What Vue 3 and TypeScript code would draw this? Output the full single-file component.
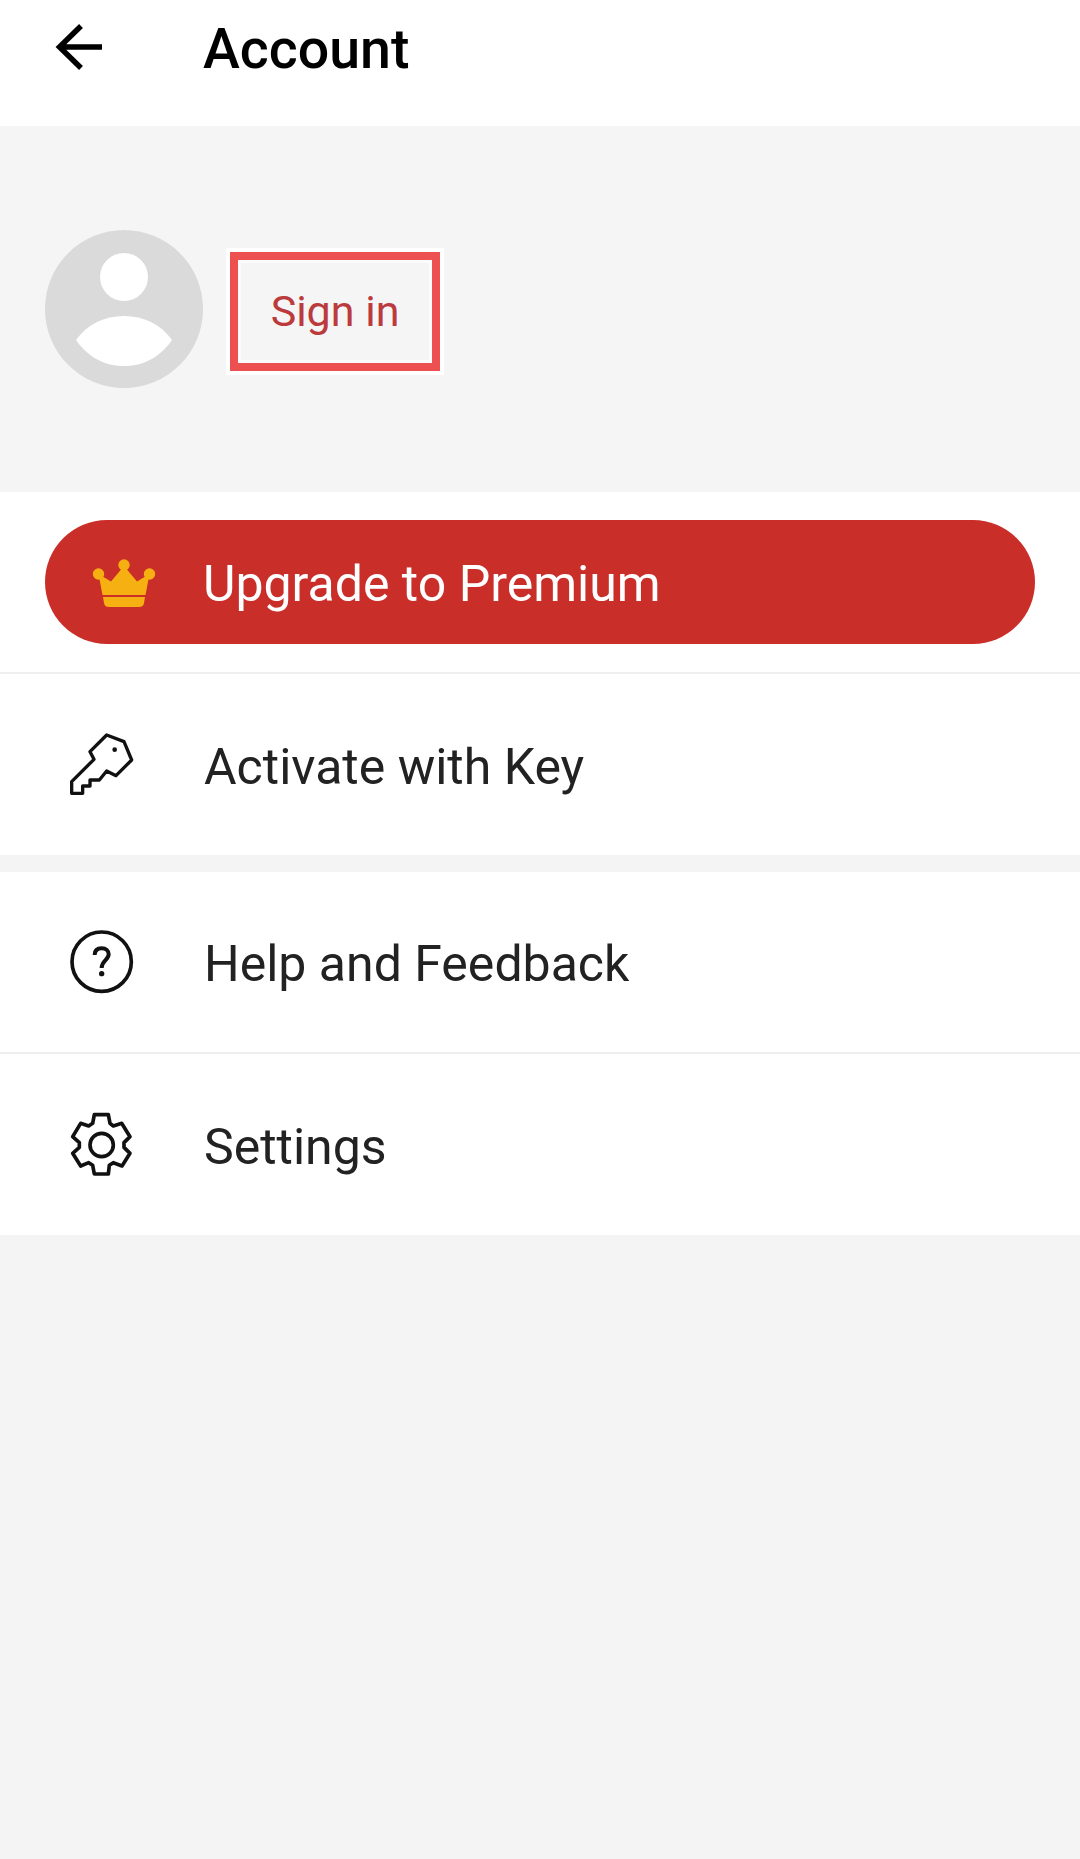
<script setup lang="ts">
// bottom list rows are grouped in two white blocks
const helpRows = ['Help and Feedback', 'Settings']
</script>

<template>
  <div class="page">
    <header class="top-bar">
      <svg class="back" width="60" height="60" viewBox="0 0 60 60" fill="none">
        <path d="M31 7 L9.5 28 L31 49 M10 28 H52" stroke="#000" stroke-width="5.5" />
      </svg>
      <h1 class="title">Account</h1>
    </header>

    <section class="profile">
      <svg class="avatar" width="158" height="158" viewBox="0 0 158 158">
        <circle cx="79" cy="79" r="79" fill="#dadada" />
        <circle cx="79" cy="47" r="24" fill="#fff" />
        <path d="M31 110 C42 94 60 86 79 86 C98 86 116 94 127 110 C116 126 100 136 79 136 C58 136 42 126 31 110 Z" fill="#fff" />
      </svg>
      <div class="sign-in">Sign in</div>
    </section>

    <section class="block">
      <div class="premium-wrap">
        <button class="premium">
          <svg class="crown" width="70" height="56" viewBox="0 0 70 56">
            <circle cx="7.5" cy="20" r="5.7" fill="#f6b012" />
            <circle cx="33" cy="11" r="5.7" fill="#f6b012" />
            <circle cx="58.5" cy="20" r="5.7" fill="#f6b012" />
            <path d="M33 12 L46 27.5 L58.5 20 L54.5 41 H11.5 L7.5 20 L20 27.5 Z" fill="#f6b012" />
            <path d="M12 43 H54 L53 49 Q52.5 53 48 53 H18 Q13.5 53 13 49 Z" fill="#f6b012" />
          </svg>
          <span>Upgrade to Premium</span>
        </button>
      </div>
      <div class="row">
        <span class="icon">
          <svg width="110" height="110" viewBox="0 0 330 330" fill="none">
            <path d="M170 75 L222 95 L245 150 L198 197 L170 183 L148 210 H120 V228 H98 V250 H65 V215 L132 148 L120 125 Z" stroke="#111" stroke-width="10" stroke-linejoin="round" />
            <circle cx="194" cy="119" r="7" fill="#111" />
          </svg>
        </span>
        <span class="label">Activate with Key</span>
      </div>
    </section>

    <section class="block second">
      <div v-for="(text, i) in helpRows" :key="text" class="row" :class="{ split: i > 0 }">
        <span class="icon">
          <svg v-if="i === 0" width="110" height="110" viewBox="0 0 330 330" fill="none">
            <circle cx="155" cy="164" r="89" stroke="#111" stroke-width="11" />
            <path d="M134 144 C134 129 143 124 155 124 C168 124 176 131 176 142 C176 159 155 161 155 183" stroke="#111" stroke-width="12" />
            <circle cx="155" cy="200" r="8" fill="#111" />
          </svg>
          <svg v-else width="110" height="110" viewBox="0 0 330 330" fill="none">
            <path d="M133 74 H175 L180 100 L190 108 L215 100 L240 140 L222 158 V172 L240 190 L216 228 L190 218 L178 226 L175 252 H133 L128 226 L116 218 L92 228 L68 190 L88 172 V158 L68 140 L92 100 L116 108 L128 100 Z" stroke="#111" stroke-width="11" stroke-linejoin="round" />
            <circle cx="155" cy="165" r="35" stroke="#111" stroke-width="11" />
          </svg>
        </span>
        <span class="label">{{ text }}</span>
      </div>
    </section>
  </div>
</template>

<style scoped>
.page {
  min-height: 1859px;
  background: #f4f4f4;
  font-family: Roboto, "Liberation Sans", sans-serif;
}
.top-bar {
  height: 126px;
  background: #fff;
  display: flex;
  align-items: flex-start;
  box-sizing: border-box;
  padding: 19px 0 0 50px;
}
.back { flex: none; }
.title {
  margin: 1px 0 0 93px;
  font-size: 55.5px;
  line-height: 60px;
  font-weight: 500;
  color: #000;
}
.profile {
  height: 366px;
  box-sizing: border-box;
  padding-left: 45px;
  background: #f5f5f5;
  display: flex;
  align-items: center;
}
.avatar { flex: none; }
.sign-in {
  margin: 4px 0 0 27px;
  width: 194px;
  height: 103px;
  border: 8px solid #ec5050;
  box-shadow: 0 0 0 4px #fff, inset 0 0 0 3px #fbfbfb;
  display: flex;
  align-items: center;
  justify-content: center;
  font-size: 43px;
  color: #bb3a3c;
}
.block { background: #fff; }
.second { margin-top: 17px; }
.premium-wrap {
  padding: 28px 45px;
  border-bottom: 2px solid #efefef;
}
.premium {
  width: 100%;
  height: 124px;
  border: none;
  border-radius: 62px;
  background: #ca2e29;
  color: #fff;
  font-family: inherit;
  font-size: 50px;
  display: flex;
  align-items: center;
  padding: 4px 0 0 46px;
}
.crown { flex: none; margin: -4px 42px 0 0; }
.row {
  height: 181px;
  display: flex;
  align-items: center;
  padding-left: 50px;
}
.second .row:first-child { height: 180px; }
.row.split { border-top: 2px solid #efefef; }
.icon {
  width: 110px;
  height: 110px;
  flex: none;
  margin-right: 44px;
}
.icon svg { display: block; }
.label {
  padding-top: 4px;
  font-size: 50px;
  color: #222;
}
</style>

<style>
html, body { background: #f4f4f4; }
</style>
